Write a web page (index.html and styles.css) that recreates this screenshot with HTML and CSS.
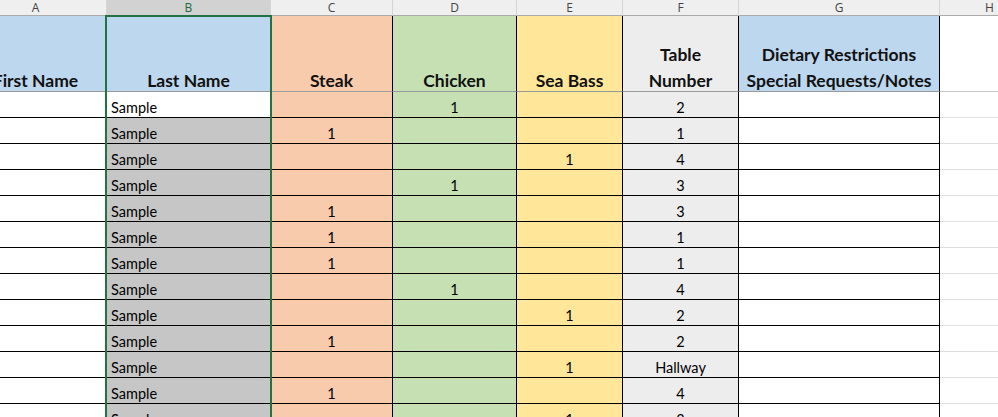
FILE: index.html
```html
<!DOCTYPE html>
<html lang="en">
<head>
  <meta charset="UTF-8" />
  <title>Guest List - Meal Choices</title>
  <link rel="stylesheet" href="styles.css">
</head>
<body>

  <div class="wrap">
    <div class="sheet">
      <!-- letras das colunas -->
      <div class="col-head">A</div>
      <div class="col-head ativo">B</div>
      <div class="col-head">C</div>
      <div class="col-head">D</div>
      <div class="col-head">E</div>
      <div class="col-head">F</div>
      <div class="col-head">G</div>
      <div class="col-head">H</div>

      <!-- linha de titulo -->
      <div class="titulo first"><span>First Name</span></div>
      <div class="titulo last"><span>Last Name</span></div>
      <div class="titulo steak"><span>Steak</span></div>
      <div class="titulo chicken"><span>Chicken</span></div>
      <div class="titulo bass"><span>Sea Bass</span></div>
      <div class="titulo mesa"><span>Table<br>Number</span></div>
      <div class="titulo notes"><span>Dietary Restrictions<br>Special Requests/Notes</span></div>
      <div class="titulo blank"></div>

      <div class="cel first"></div><div class="cel last atual">Sample</div><div class="cel steak"></div><div class="cel chicken">1</div><div class="cel bass"></div><div class="cel mesa">2</div><div class="cel notes"></div><div class="cel blank"></div>
      <div class="cel first"></div><div class="cel last">Sample</div><div class="cel steak">1</div><div class="cel chicken"></div><div class="cel bass"></div><div class="cel mesa">1</div><div class="cel notes"></div><div class="cel blank"></div>
      <div class="cel first"></div><div class="cel last">Sample</div><div class="cel steak"></div><div class="cel chicken"></div><div class="cel bass">1</div><div class="cel mesa">4</div><div class="cel notes"></div><div class="cel blank"></div>
      <div class="cel first"></div><div class="cel last">Sample</div><div class="cel steak"></div><div class="cel chicken">1</div><div class="cel bass"></div><div class="cel mesa">3</div><div class="cel notes"></div><div class="cel blank"></div>
      <div class="cel first"></div><div class="cel last">Sample</div><div class="cel steak">1</div><div class="cel chicken"></div><div class="cel bass"></div><div class="cel mesa">3</div><div class="cel notes"></div><div class="cel blank"></div>
      <div class="cel first"></div><div class="cel last">Sample</div><div class="cel steak">1</div><div class="cel chicken"></div><div class="cel bass"></div><div class="cel mesa">1</div><div class="cel notes"></div><div class="cel blank"></div>
      <div class="cel first"></div><div class="cel last">Sample</div><div class="cel steak">1</div><div class="cel chicken"></div><div class="cel bass"></div><div class="cel mesa">1</div><div class="cel notes"></div><div class="cel blank"></div>
      <div class="cel first"></div><div class="cel last">Sample</div><div class="cel steak"></div><div class="cel chicken">1</div><div class="cel bass"></div><div class="cel mesa">4</div><div class="cel notes"></div><div class="cel blank"></div>
      <div class="cel first"></div><div class="cel last">Sample</div><div class="cel steak"></div><div class="cel chicken"></div><div class="cel bass">1</div><div class="cel mesa">2</div><div class="cel notes"></div><div class="cel blank"></div>
      <div class="cel first"></div><div class="cel last">Sample</div><div class="cel steak">1</div><div class="cel chicken"></div><div class="cel bass"></div><div class="cel mesa">2</div><div class="cel notes"></div><div class="cel blank"></div>
      <div class="cel first"></div><div class="cel last">Sample</div><div class="cel steak"></div><div class="cel chicken"></div><div class="cel bass">1</div><div class="cel mesa">Hallway</div><div class="cel notes"></div><div class="cel blank"></div>
      <div class="cel first"></div><div class="cel last">Sample</div><div class="cel steak">1</div><div class="cel chicken"></div><div class="cel bass"></div><div class="cel mesa">4</div><div class="cel notes"></div><div class="cel blank"></div>
      <div class="cel first"></div><div class="cel last">Sample</div><div class="cel steak"></div><div class="cel chicken"></div><div class="cel bass">1</div><div class="cel mesa">3</div><div class="cel notes"></div><div class="cel blank"></div>
    </div>

    <!-- contorno da coluna selecionada -->
    <div class="selecao"></div>
  </div>

</body>
</html>
```

FILE: styles.css
```css
html, body {
  margin: 0; padding: 0;
  height: 100%;
  overflow: hidden;
  background: white;
  color: black;
}

.wrap {
  position: relative;
  width: 998px;
  height: 417px;
  overflow: hidden;
}

.sheet {
  display: grid;
  grid-template-columns: 142px 164px 122px 124px 106px 116px 201px 100px;
  grid-template-rows: 16px 76px;
  grid-auto-rows: 26px;
  margin-left: -35px;
  font-family: Lato, 'Liberation Sans', sans-serif;
}

.sheet > div {
  box-sizing: border-box;
}

/* cabeçalho com as letras */
.col-head {
  background: #efefef;
  border-right: 1px solid #d5d5d5;
  border-bottom: 1px solid #ababab;
  font-family: 'Open Sans', 'Noto Sans', sans-serif;
  font-size: 12px;
  line-height: 15px;
  color: #444;
  text-align: center;
}

.col-head.ativo {
  background: #d2d2d2;
  color: #1f6b42;
}

/* linha de títulos */
.titulo {
  display: flex;
  align-items: flex-end;
  justify-content: center;
  text-align: center;
  font-weight: 700;
  font-size: 17.5px;
  line-height: 26px;
  color: #111;
  border-right: 1px solid #000;
  border-bottom: 1px solid #9a9a9a;
  white-space: nowrap;
}

.titulo span {
  margin-bottom: -3px;
}

.titulo.blank {
  border-right: none;
  border-bottom-color: #c8c8c8;
}

/* células */
.cel {
  display: flex;
  align-items: flex-end;
  justify-content: center;
  font-size: 14.5px;
  line-height: 18px;
  padding-bottom: 0;
  border-right: 1px solid #000;
  border-bottom: 1px solid #000;
}

.cel.last {
  justify-content: flex-start;
  padding-left: 4px;
  background: #c6c6c6;
}

.cel.last.atual {
  background: white;
}

.cel.blank {
  border-right: none;
  border-bottom: 1px solid #dedede;
}

.first { background: white; }
.titulo.first, .titulo.last, .titulo.notes { background: #bdd7ee; }
.steak { background: #f8cbad; }
.chicken { background: #c6e0b4; }
.bass { background: #ffe699; }
.mesa { background: #ededed; }
.notes, .blank { background: white; }

.selecao {
  position: absolute;
  left: 105px;
  top: 15px;
  width: 167px;
  height: 420px;
  box-sizing: border-box;
  border: 2px solid #217346;
  pointer-events: none;
}
```
